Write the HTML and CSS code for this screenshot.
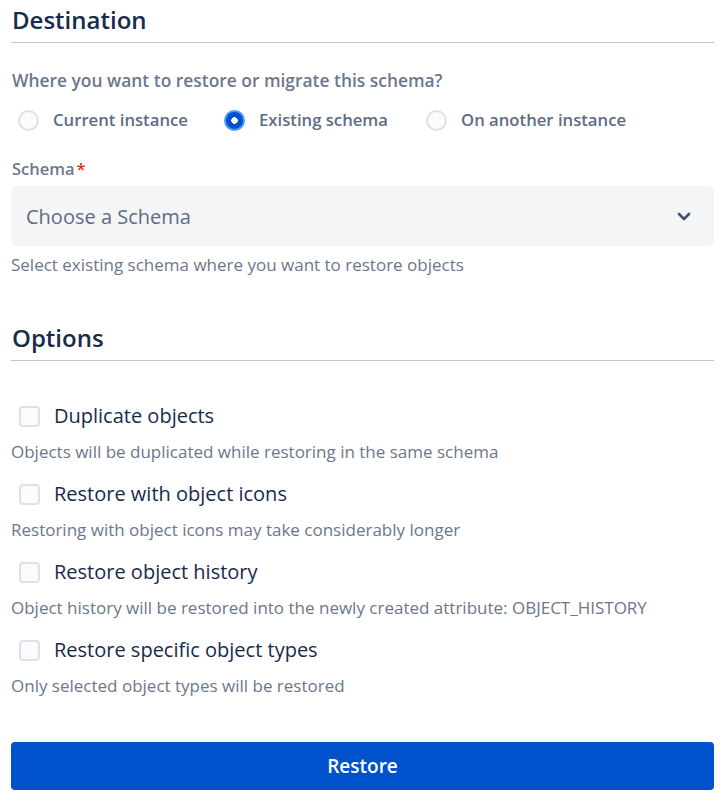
FILE: index.html
```html
<!DOCTYPE html>
<html lang="en">
<head>
  <meta charset="UTF-8">
  <meta name="viewport" content="width=device-width, initial-scale=1.0">
  <title>Restore schema</title>
  <link rel="stylesheet" href="styles.css">
</head>
<body>
  <div class="panel">
    <h2 class="section-title">Destination</h2>

    <p class="question">Where you want to restore or migrate this schema?</p>
    <div class="radio-row">
      <label class="radio"><span class="radio-dot"></span>Current instance</label>
      <label class="radio checked"><span class="radio-dot"></span>Existing schema</label>
      <label class="radio"><span class="radio-dot"></span>On another instance</label>
    </div>

    <div class="field">
      <label class="field-label">Schema<span class="required">*</span></label>
      <div class="select">
        <span>Choose a Schema</span>
        <svg class="chevron" width="14" height="9" viewBox="0 0 14 9">
          <path d="M2 2l5 5 5-5" fill="none" stroke="#42526e" stroke-width="2.6" stroke-linecap="round" stroke-linejoin="round"/>
        </svg>
      </div>
      <p class="hint">Select existing schema where you want to restore objects</p>
    </div>

    <h2 class="section-title options-title">Options</h2>

    <div class="options">
      <div class="option">
        <label class="checkbox"><span class="box"></span>Duplicate objects</label>
        <p class="hint">Objects will be duplicated while restoring in the same schema</p>
      </div>
      <div class="option">
        <label class="checkbox"><span class="box"></span>Restore with object icons</label>
        <p class="hint">Restoring with object icons may take considerably longer</p>
      </div>
      <div class="option">
        <label class="checkbox"><span class="box"></span>Restore object history</label>
        <p class="hint">Object history will be restored into the newly created attribute: OBJECT_HISTORY</p>
      </div>
      <div class="option">
        <label class="checkbox"><span class="box"></span>Restore specific object types</label>
        <p class="hint">Only selected object types will be restored</p>
      </div>
    </div>

    <button class="restore-btn">Restore</button>
  </div>
</body>
</html>
```

FILE: styles.css
```css
body {
  margin: 0;
  font-family: 'Open Sans', 'Noto Sans', sans-serif;
  color: #172b4d;
  background: #fff;
}
.panel {
  width: 703px;
  padding: 0 14px 0 11px;
}
.section-title {
  margin: 0;
  padding: 4px 0 6px 1px;
  font-size: 24px;
  font-weight: 600;
  line-height: 32px;
  color: #172b4d;
  border-bottom: 1px solid #c1c7d0;
}
.question {
  margin: 25px 0 0 1px;
  font-size: 17.4px;
  font-weight: 600;
  line-height: 24px;
  color: #6b778c;
}
.radio-row {
  display: flex;
  margin-top: 16px;
  padding-left: 7px;
}
.radio {
  display: flex;
  align-items: center;
  gap: 14px;
  width: 206px;
  font-size: 16.7px;
  font-weight: 600;
  line-height: 24px;
  color: #5e6c84;
  cursor: pointer;
}
.radio.checked {
  width: 202px;
}
.radio-dot {
  box-sizing: border-box;
  width: 21px;
  height: 21px;
  border-radius: 50%;
  border: 2px solid #dfe1e6;
  background: #fafbfc;
}
.radio.checked .radio-dot {
  border: 2px solid #4c9aff;
  background: radial-gradient(circle, #fff 0 3px, #0052cc 3.5px);
}
.field {
  margin-top: 26px;
}
.field-label {
  display: block;
  margin-left: 1px;
  font-size: 16.5px;
  font-weight: 600;
  line-height: 22px;
  color: #6b778c;
}
.required {
  color: #de350b;
  margin-left: 2px;
}
.select {
  display: flex;
  align-items: center;
  justify-content: space-between;
  height: 60px;
  margin-top: 6px;
  padding: 0 23px 0 15px;
  background: #f4f5f7;
  border-radius: 4px;
  font-size: 20px;
  color: #5e6c84;
}
.chevron {
  display: block;
}
.hint {
  margin: 7px 0 0 0;
  font-size: 17px;
  line-height: 24px;
  color: #6b778c;
}
.options-title {
  margin-top: 41px;
}
.options {
  margin-top: 41px;
}
.option {
  margin-bottom: 16px;
}
.checkbox {
  display: flex;
  align-items: center;
  gap: 14px;
  padding-left: 8px;
  font-size: 20px;
  line-height: 28px;
  color: #172b4d;
  cursor: pointer;
}
.box {
  box-sizing: border-box;
  width: 21px;
  height: 21px;
  border: 2px solid #dfe1e6;
  border-radius: 4px;
  background: #fafbfc;
}
.option .hint {
  margin-top: 10px;
}
.restore-btn {
  display: block;
  width: 100%;
  height: 48px;
  margin-top: 44px;
  border: none;
  border-radius: 4px;
  background: #0052cc;
  color: #fff;
  font-family: inherit;
  font-size: 19px;
  font-weight: 600;
  cursor: pointer;
}
```
